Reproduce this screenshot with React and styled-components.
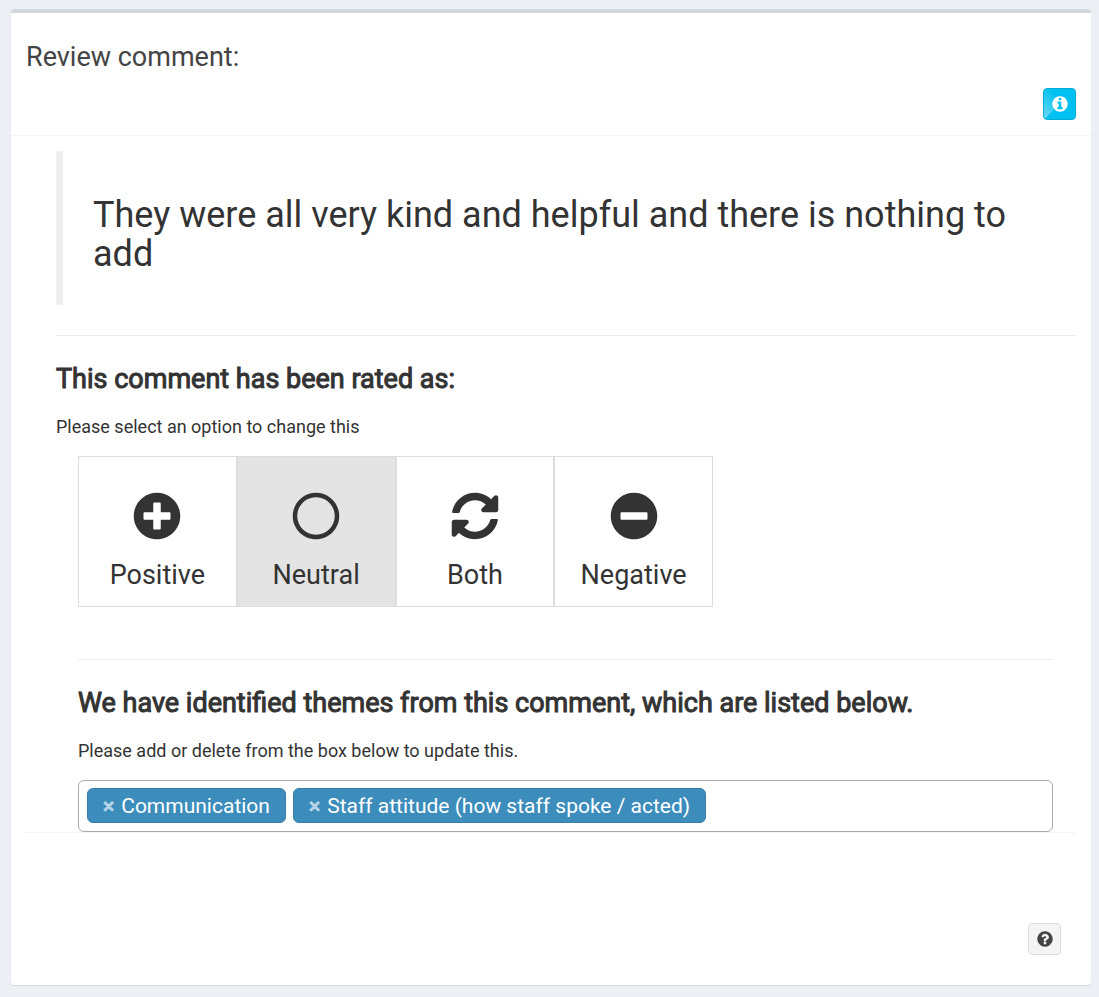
import { useState } from "react";
import styled, { createGlobalStyle } from "styled-components";
import {
  FaMinusCircle,
  FaPlusCircle,
  FaRegCircle,
  FaSyncAlt,
} from "react-icons/fa";

const GlobalStyle = createGlobalStyle`
  * {
    box-sizing: border-box;
  }

  body {
    margin: 0;
    background: #ecf0f5;
    color: #333;
    font-family: Roboto, "Liberation Sans", sans-serif;
    font-size: 18px;
    line-height: 26px;
  }

  button {
    font-family: inherit;
    cursor: pointer;
  }
`;

const Page = styled.main`
  padding: 9px 8px 12px 11px;
`;

const Card = styled.section`
  background: #fff;
  border-top: 4px solid #d2d6de;
  border-radius: 4px;
  box-shadow: 0 1px 1px rgba(0, 0, 0, 0.1);
`;

const CardHeader = styled.header`
  padding: 29px 15px 15px;
  border-bottom: 1px solid #f4f4f4;
`;

const CardTitle = styled.h1`
  margin: 0;
  font-size: 27px;
  font-weight: 400;
  line-height: 30px;
  color: #444;
`;

const HeaderTools = styled.div`
  display: flex;
  justify-content: flex-end;
  padding-top: 16px;
`;

const IconButton = styled.button`
  display: flex;
  align-items: center;
  justify-content: center;
  width: 33px;
  height: 32px;
  padding: 0;
  border-radius: 4px;
  color: ${(props) => (props.$info ? "#fff" : "#444")};
  border: 1px solid ${(props) => (props.$info ? "#00acd6" : "#ddd")};
  background: ${(props) =>
    props.$info
      ? "linear-gradient(to top left, #00c0ef 50%, transparent 50%), linear-gradient(45deg, #6fdaf6, #00c0ef 60%)"
      : "#f4f4f4"};

  svg {
    width: 18px;
    height: 18px;
    fill: currentColor;
  }
`;

const CardBody = styled.div`
  margin: 0 15px;
  padding: 15px 0 0 30px;
`;

const Quote = styled.blockquote`
  margin: 0 0 30px;
  padding: 45px 30px 31px;
  border-left: 7px solid #eee;
  font-size: 36px;
  line-height: 39px;
`;

const Divider = styled.hr`
  height: 1px;
  margin: 0;
  border: 0;
  background: #eee;
`;

const SectionTitle = styled.h2`
  margin: 0 0 20px;
  padding-top: 28px;
  font-size: 27px;
  font-weight: 400;
  line-height: 30px;
  -webkit-text-stroke: 1px currentColor;
`;

const Hint = styled.p`
  margin: 0 0 16px;
`;

const Inset = styled.div`
  padding: 0 23px 0 22px;
`;

const RatingGroup = styled.div`
  display: flex;
  max-width: 635px;
  margin-bottom: 52px;
`;

const RatingButton = styled.button`
  display: flex;
  flex: 1;
  flex-direction: column;
  align-items: center;
  gap: 20px;
  padding: 35px 0 16px;
  border: 1px solid #ddd;
  background: ${(props) => (props.$active ? "#e4e4e4" : "#fff")};
  color: #333;
  font-size: 27px;
  line-height: 30px;

  svg {
    width: 48px;
    height: 48px;
  }
`;

const TagBox = styled.div`
  display: flex;
  flex-wrap: wrap;
  gap: 7px;
  padding: 7px 8px 8px;
  border: 1px solid #aaa;
  border-radius: 6px;
`;

const Tag = styled.span`
  display: flex;
  align-items: center;
  gap: 7px;
  height: 35px;
  padding: 0 15px;
  border: 1px solid #367fa9;
  border-radius: 6px;
  background: #3c8dbc;
  color: #fff;
  font-size: 21px;
`;

const TagRemove = styled.button`
  padding: 0;
  border: 0;
  background: none;
  color: #b8d6e7;
  font-size: 21px;
  line-height: 26px;
  -webkit-text-stroke: 1px currentColor;
`;

const TagInput = styled.input`
  flex: 1;
  min-width: 20px;
  padding: 0;
  border: 0;
  outline: 0;
  background: none;
  font: inherit;
`;

const CardFooter = styled.footer`
  display: flex;
  justify-content: flex-end;
  margin: 0 15px;
  padding: 90px 15px 30px;
  border-top: 1px solid #f4f4f4;
`;

const InfoIcon = () => (
  <svg viewBox="0 0 1792 1792" aria-hidden="true">
    <path d="M1152 1376v-160q0-14-9-23t-23-9h-96v-512q0-14-9-23t-23-9h-320q-14 0-23 9t-9 23v160q0 14 9 23t23 9h96v320h-96q-14 0-23 9t-9 23v160q0 14 9 23t23 9h448q14 0 23-9t9-23zm-128-896v-160q0-14-9-23t-23-9h-192q-14 0-23 9t-9 23v160q0 14 9 23t23 9h192q14 0 23-9t9-23zm640 416q0 209-103 385.5t-279.5 279.5-385.5 103-385.5-103-279.5-279.5-103-385.5 103-385.5 279.5-279.5 385.5-103 385.5 103 279.5 279.5 103 385.5z" />
  </svg>
);

const HelpIcon = () => (
  <svg viewBox="0 0 1792 1792" aria-hidden="true">
    <path d="M1024 1376v-192q0-14-9-23t-23-9h-192q-14 0-23 9t-9 23v192q0 14 9 23t23 9h192q14 0 23-9t9-23zm256-672q0-88-55.5-163t-138.5-116-170-41q-243 0-371 213-15 24 8 42l132 100q7 6 19 6 16 0 25-12 53-68 86-92 34-24 86-24 48 0 85.5 26t37.5 59q0 38-20 61t-68 45q-63 28-115.5 86.5t-52.5 125.5v36q0 14 9 23t23 9h192q14 0 23-9t9-23q0-19 21.5-49.5t54.5-49.5q32-18 49-28.5t46-35 44.5-48 28-60.5 12.5-81zm384 192q0 209-103 385.5t-279.5 279.5-385.5 103-385.5-103-279.5-279.5-103-385.5 103-385.5 279.5-279.5 385.5-103 385.5 103 279.5 279.5 103 385.5z" />
  </svg>
);

const ratings = [
  { label: "Positive", Icon: FaPlusCircle },
  { label: "Neutral", Icon: FaRegCircle },
  { label: "Both", Icon: FaSyncAlt },
  { label: "Negative", Icon: FaMinusCircle },
];

const RatingPicker = () => {
  const [rating, setRating] = useState("Neutral");

  return (
    <RatingGroup role="group" aria-label="Comment rating">
      {ratings.map(({ label, Icon }) => (
        <RatingButton
          key={label}
          type="button"
          $active={label === rating}
          aria-pressed={label === rating}
          onClick={() => setRating(label)}
        >
          <Icon aria-hidden="true" />
          {label}
        </RatingButton>
      ))}
    </RatingGroup>
  );
};

const ThemePicker = () => {
  const [themes, setThemes] = useState([
    "Communication",
    "Staff attitude (how staff spoke / acted)",
  ]);

  return (
    <TagBox>
      {themes.map((theme) => (
        <Tag key={theme}>
          <TagRemove
            type="button"
            aria-label={`Remove ${theme}`}
            onClick={() => setThemes(themes.filter((t) => t !== theme))}
          >
            ×
          </TagRemove>
          {theme}
        </Tag>
      ))}
      <TagInput type="text" aria-label="Add a theme" />
    </TagBox>
  );
};

const App = () => {
  return (
    <>
      <GlobalStyle />
      <Page>
        <Card>
          <CardHeader>
            <CardTitle>Review comment:</CardTitle>
            <HeaderTools>
              <IconButton type="button" $info aria-label="Information">
                <InfoIcon />
              </IconButton>
            </HeaderTools>
          </CardHeader>
          <CardBody>
            <Quote>
              They were all very kind and helpful and there is nothing to add
            </Quote>
            <Divider />
            <SectionTitle>This comment has been rated as:</SectionTitle>
            <Hint>Please select an option to change this</Hint>
            <Inset>
              <RatingPicker />
              <Divider />
              <SectionTitle>
                We have identified themes from this comment, which are listed
                below.
              </SectionTitle>
              <Hint>Please add or delete from the box below to update this.</Hint>
              <ThemePicker />
            </Inset>
          </CardBody>
          <CardFooter>
            <IconButton type="button" aria-label="Help">
              <HelpIcon />
            </IconButton>
          </CardFooter>
        </Card>
      </Page>
    </>
  );
};

export default App;
